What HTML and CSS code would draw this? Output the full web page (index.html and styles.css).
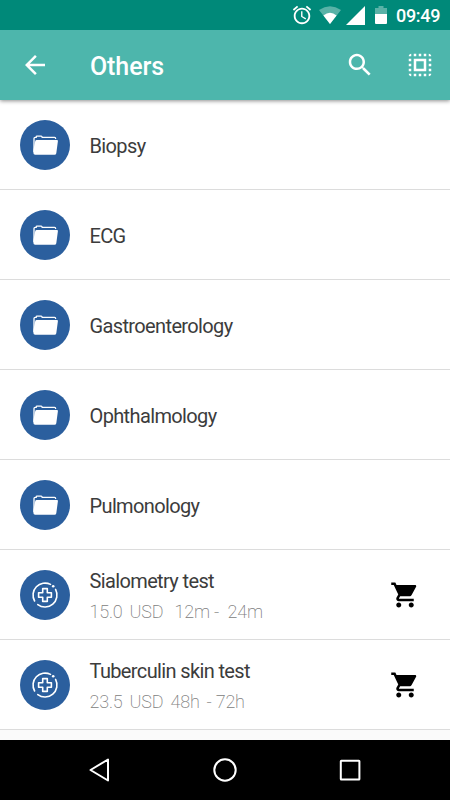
FILE: index.html
```html
<!DOCTYPE html>
<html lang="en">
<head>
<meta charset="utf-8">
<title>Others</title>
<link rel="stylesheet" href="styles.css">
</head>
<body>
<svg class="defs" aria-hidden="true">
  <symbol id="folder" viewBox="0 0 50 50">
    <path d="M14 32V18.6Q14 17.4 15.2 17.4H16.2V16.9Q16.2 16.1 17 16.1H21.2Q22 16.1 22.2 17.4H34.6Q35.6 17.4 35.7 19" fill="none" stroke="#fff" stroke-width="1.3"/>
    <path d="M16.6 20H37Q38.1 20 37.9 21.2L36.3 33.2Q36 34.8 34.5 34.8H15.2Q13.4 34.8 13.4 33V30L15.2 21.2Q15.5 20 16.6 20Z" fill="#fff"/>
  </symbol>
  <symbol id="medical" viewBox="0 0 50 50">
    <g fill="none" stroke="#fff" stroke-width="1.6" stroke-linecap="round" stroke-linejoin="round">
      <path d="M14.6 31A12 12 0 0 1 30.5 14.4M35.6 19.4A12 12 0 0 1 17.8 34.6"/>
      <path d="M22.7 18.6H27.3V22.7H31.4V27.3H27.3V31.4H22.7V27.3H18.6V22.7H22.7Z"/>
    </g>
    <circle cx="33.2" cy="16.2" r="1.3" fill="#fff"/>
  </symbol>
  <symbol id="cart" viewBox="0 0 24 24">
    <path d="M7 18c-1.1 0-1.99.9-1.99 2S5.9 22 7 22s2-.9 2-2-.9-2-2-2zM1 2v2h2l3.6 7.59-1.35 2.45c-.16.28-.25.61-.25.96 0 1.1.9 2 2 2h12v-2H7.42c-.14 0-.25-.11-.25-.25l.03-.12.9-1.63h7.45c.75 0 1.41-.41 1.75-1.03l3.58-6.49c.08-.14.12-.31.12-.48 0-.55-.45-1-1-1H5.21l-.94-2H1zm16 16c-1.1 0-1.99.9-1.99 2s.89 2 1.99 2 2-.9 2-2-.9-2-2-2z"/>
  </symbol>
</svg>
<header>
  <div class="status">
    <svg class="alarm" viewBox="0 0 24 24"><path fill="#fff" d="M22 5.72l-4.6-3.86-1.29 1.53 4.6 3.86L22 5.72zM7.88 3.39L6.6 1.86 2 5.71l1.29 1.53 4.59-3.85zM12.5 8H11v6l4.75 2.85.75-1.23-4-2.37V8zM12 4c-4.97 0-9 4.03-9 9s4.02 9 9 9c4.97 0 9-4.03 9-9s-4.03-9-9-9zm0 16c-3.87 0-7-3.13-7-7s3.13-7 7-7 7 3.13 7 7-3.13 7-7 7z"/></svg>
    <svg class="wifi" viewBox="0 0 22 18"><path fill="#fff" opacity=".35" d="M0 4Q11-3.4 22 4L11 18Z"/><path fill="#fff" d="M4.4 9.6Q11 4 17.6 9.6L11 18Z"/></svg>
    <svg class="signal" viewBox="0 0 19 19"><path fill="#fff" d="M19 0V19H0Z"/></svg>
    <svg class="battery" viewBox="0 0 12 18"><path fill="#fff" opacity=".35" d="M3.5 0H8.5V2H12V8H0V2H3.5Z"/><path fill="#fff" d="M0 8H12V17Q12 18 11 18H1Q0 18 0 17Z"/></svg>
    <span class="time">09:49</span>
  </div>
  <div class="toolbar">
    <svg class="icon" viewBox="0 0 24 24"><path fill="#fff" d="M20 11H7.83l5.59-5.59L12 4l-8 8 8 8 1.41-1.41L7.83 13H20v-2z"/></svg>
    <h1>Others</h1>
    <svg class="icon" viewBox="0 0 24 24"><path fill="#fff" d="M15.5 14h-.79l-.28-.27C15.41 12.59 16 11.11 16 9.5 16 5.91 13.09 3 9.5 3S3 5.91 3 9.5 5.91 16 9.5 16c1.61 0 3.09-.59 4.23-1.57l.27.28v.79l5 4.99L20.49 19l-4.99-5zm-6 0C7.01 14 5 11.99 5 9.5S7.01 5 9.5 5 14 7.01 14 9.5 11.99 14 9.5 14z"/></svg>
    <svg class="icon select" viewBox="0 0 24 24"><path fill="#fff" d="M3 5h2V3c-1.1 0-2 .9-2 2zm0 8h2v-2H3v2zm4 8h2v-2H7v2zM3 9h2V7H3v2zm10-6h-2v2h2V3zm6 0v2h2c0-1.1-.9-2-2-2zM5 21v-2H3c0 1.1.9 2 2 2zm-2-4h2v-2H3v2zM9 3H7v2h2V3zm2 18h2v-2h-2v2zm8-8h2v-2h-2v2zm0 8c1.1 0 2-.9 2-2h-2v2zm0-12h2V7h-2v2zm0 8h2v-2h-2v2zm-4 4h2v-2h-2v2zm0-16h2V3h-2v2zM7 17h10V7H7v10zm2-8h6v6H9V9z"/></svg>
  </div>
</header>
<main>
  <div class="row"><svg class="avatar"><use href="#folder"/></svg><div class="name">Biopsy</div></div>
  <div class="row"><svg class="avatar"><use href="#folder"/></svg><div class="name">ECG</div></div>
  <div class="row"><svg class="avatar"><use href="#folder"/></svg><div class="name">Gastroenterology</div></div>
  <div class="row"><svg class="avatar"><use href="#folder"/></svg><div class="name">Ophthalmology</div></div>
  <div class="row"><svg class="avatar"><use href="#folder"/></svg><div class="name">Pulmonology</div></div>
  <div class="row">
    <svg class="avatar"><use href="#medical"/></svg>
    <div class="text"><div class="name">Sialometry test</div>
      <div class="meta months"><span>15.0</span><span>USD</span><span>12m -</span><span>24m</span></div></div>
    <svg class="icon cart"><use href="#cart"/></svg>
  </div>
  <div class="row">
    <svg class="avatar"><use href="#medical"/></svg>
    <div class="text"><div class="name">Tuberculin skin test</div>
      <div class="meta hours"><span>23.5</span><span>USD</span><span>48h</span><span>- 72h</span></div></div>
    <svg class="icon cart"><use href="#cart"/></svg>
  </div>
</main>
<nav>
  <svg viewBox="0 0 30 30"><path d="M19 4.5V25.5L1.5 15Z"/></svg>
  <svg viewBox="0 0 30 30"><circle cx="15" cy="15" r="10.7"/></svg>
  <svg viewBox="0 0 30 30"><rect x="5.8" y="5.8" width="18.6" height="18.6" rx=".5"/></svg>
</nav>
</body>
</html>
```
FILE: styles.css
```css
* { box-sizing: border-box; }
body {
  margin: 0;
  width: 450px;
  height: 800px;
  display: flex;
  flex-direction: column;
  overflow: hidden;
  background: #fafafa;
  font-family: Roboto, "Liberation Sans", sans-serif;
}
svg { display: block; flex: none; }
.defs { position: absolute; width: 0; height: 0; }
header {
  position: relative;
  z-index: 1;
  box-shadow: 0 1px 4px rgba(0, 0, 0, .45);
}
.status {
  height: 30px;
  padding-right: 10px;
  display: flex;
  align-items: center;
  justify-content: flex-end;
  background: #008979;
}
.alarm { width: 22px; height: 22px; margin-right: 6px; }
.wifi { width: 22px; height: 18px; margin-right: 5px; }
.signal { width: 19px; height: 19px; margin-right: 10px; }
.battery { width: 12px; height: 18px; margin-right: 8px; }
.time {
  width: 45px;
  color: #fff;
  font-size: 18px;
  font-weight: 500;
  line-height: 30px;
  letter-spacing: -.3px;
  padding: 1px 0 0 1px;
  white-space: nowrap;
}
.toolbar {
  height: 70px;
  padding: 0 15px 0 20px;
  display: flex;
  align-items: center;
  background: #4db6ac;
}
.icon { width: 30px; height: 30px; }
.select { margin-left: 30px; }
h1 {
  flex: 1;
  margin: 3px 0 0 40px;
  color: #fff;
  font-size: 25px;
  font-weight: 500;
  line-height: 30px;
  letter-spacing: -.1px;
}
main { flex: none; }
.row {
  height: 90px;
  padding: 0 30px 0 20px;
  display: flex;
  align-items: center;
  background: #fff;
  border-bottom: 1px solid #dcdcdc;
}
.avatar {
  width: 50px;
  height: 50px;
  margin: 1px 19.5px 0 0;
  border-radius: 50%;
  background: #2b5f9e;
}
.name {
  color: #3c3c3c;
  font-size: 20px;
  line-height: 30px;
  letter-spacing: -.63px;
  padding-top: 2px;
  white-space: nowrap;
}
.text { flex: 1; }
.text .name { padding-top: 2px; }
.meta {
  display: grid;
  height: 30px;
  color: #808080;
  font-size: 18px;
  font-weight: 200;
  line-height: 31px;
  letter-spacing: -.2px;
  white-space: pre;
}
.months { grid-template-columns: 40px 45px 53px auto; }
.hours { grid-template-columns: 40px 41px 36px auto; }
.cart { fill: #000; margin-top: 1px; }
nav {
  height: 60px;
  margin-top: auto;
  padding: 0 85px;
  display: flex;
  align-items: center;
  justify-content: space-between;
  background: #000;
}
nav svg {
  width: 30px;
  height: 30px;
  fill: none;
  stroke: #fff;
  stroke-width: 2;
  stroke-linejoin: round;
}
nav svg:first-child { overflow: visible; padding-left: 4px; width: 34px; margin-right: -4px; }
```
